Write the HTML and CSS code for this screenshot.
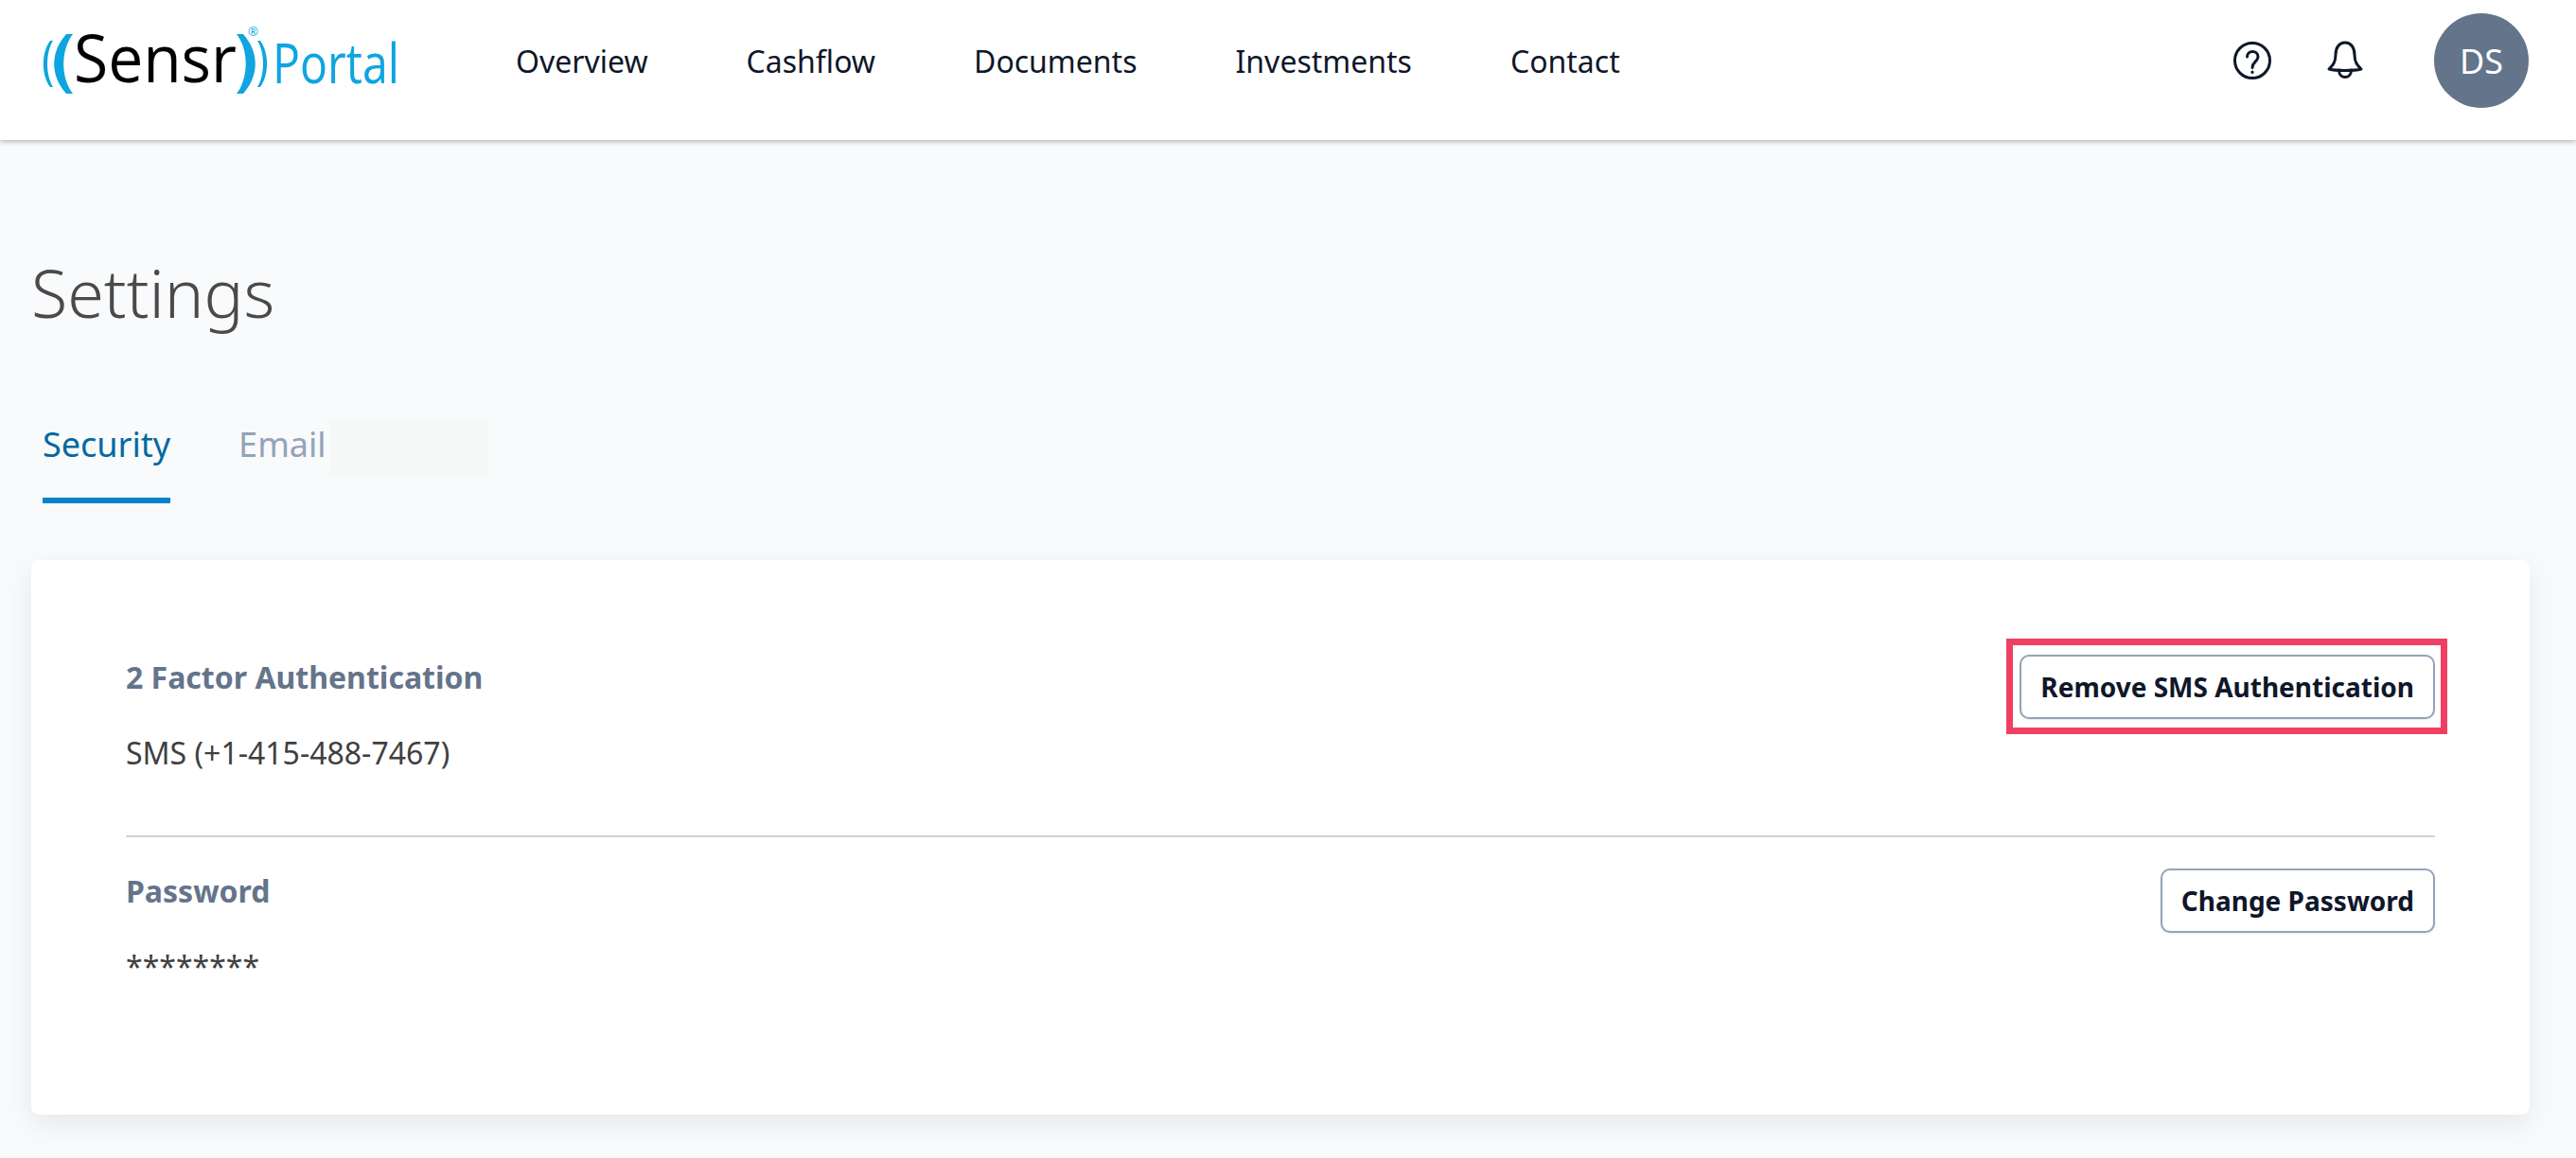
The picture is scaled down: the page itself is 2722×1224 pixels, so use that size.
FILE: index.html
```html
<!DOCTYPE html>
<html lang="en">
<head>
<meta charset="utf-8">
<title>Settings</title>
<link rel="stylesheet" href="styles.css">
</head>
<body>
<header class="topbar">
  <svg class="logo" viewBox="40 5 390 110" width="390" height="110" aria-label="Sensr Portal">
    <g class="logo-arcs">
      <path d="M53 43 C43.5 56 43.5 79 53 92 H56 C48 79 48 56 56 43 Z"/>
      <path d="M70 36 C53 55 53 80 70 99 H77 C64 82 64 53 77 36 Z"/>
      <path d="M257 36 C274 55 274 80 257 99 H250 C263 82 263 53 250 36 Z"/>
      <path d="M275 43 C284.5 56 284.5 79 275 92 H272 C280 79 280 56 272 43 Z"/>
    </g>
    <text class="logo-name" x="78" y="87" textLength="172" lengthAdjust="spacingAndGlyphs">Sensr</text>
    <text class="logo-reg" x="262" y="38" textLength="11" lengthAdjust="spacingAndGlyphs">®</text>
    <text class="logo-portal" x="288" y="88" textLength="134" lengthAdjust="spacingAndGlyphs">Portal</text>
  </svg>
  <nav class="mainnav">
    <a>Overview</a>
    <a>Cashflow</a>
    <a>Documents</a>
    <a>Investments</a>
    <a>Contact</a>
  </nav>
  <div class="actions">
    <svg class="icon help" viewBox="0 0 44 44" width="44" height="44">
      <circle cx="22" cy="22" r="18.5"/>
      <path d="M16.5 18 C16.5 10.5 28 10.5 28 18 C28 23 22 23.5 22 29.5"/>
      <path d="M22 34 V34.6"/>
    </svg>
    <svg class="icon bell" viewBox="0 0 40 44" width="40" height="44">
      <path d="M3 31 C7 27 10 24 10 16 C10 8 14 3 20 3 C26 3 30 8 30 16 C30 24 33 27 37 31 C30 33 10 33 3 31 Z"/>
      <path d="M13.5 32 C13.5 42 26.5 42 26.5 32"/>
    </svg>
    <div class="avatar">DS</div>
  </div>
</header>
<main class="page">
  <h1 class="title">Settings</h1>
  <div class="tabs">
    <a class="tab tab-active">Security</a>
    <a class="tab">Email<span class="redaction"></span></a>
  </div>
  <section class="card">
    <div class="row row-first">
      <div class="info">
        <div class="label">2 Factor Authentication</div>
        <div class="value">SMS (+1-415-488-7467)</div>
      </div>
      <div class="highlight"><button class="btn">Remove SMS Authentication</button></div>
    </div>
    <div class="row row-second">
      <div class="info">
        <div class="label">Password</div>
        <div class="value">********</div>
      </div>
      <button class="btn">Change Password</button>
    </div>
  </section>
</main>
</body>
</html>
```
FILE: styles.css
```css
* { box-sizing: border-box; }
html, body { margin: 0; padding: 0; }
body {
  width: 2722px;
  height: 1224px;
  overflow: hidden;
  background: #f8fafc;
  font-family: "Noto Sans", "Open Sans", sans-serif;
  color: #404040;
}
.topbar {
  display: flex;
  align-items: center;
  height: 148px;
  padding: 0 50px 20px 40px;
  background: #fff;
  box-shadow: 0 2px 5px rgba(15, 23, 42, .28);
}
.logo { flex: none; margin-top: -8px; }
.logo-arcs { fill: #0ea5e0; }
.logo-name { font-family: "Open Sans", sans-serif; font-size: 70px; fill: #000; }
.logo-reg { font-family: "Open Sans", sans-serif; font-size: 13px; fill: #0ea5e0; }
.logo-portal { font-family: "Open Sans", sans-serif; font-size: 58px; fill: #0ea5e0; }
.mainnav {
  display: flex;
  gap: 104px;
  margin-left: 115px;
  font-size: 32px;
  color: #0f172a;
}
.actions { display: flex; align-items: center; margin-left: auto; }
.icon { fill: none; stroke: #0f172a; stroke-width: 3; stroke-linecap: round; stroke-linejoin: round; }
.bell { margin-left: 56px; }
.avatar {
  display: flex;
  align-items: center;
  justify-content: center;
  width: 100px;
  height: 100px;
  margin-left: 74px;
  border-radius: 50%;
  background: #64748b;
  color: #fff;
  font-size: 36px;
}
.page { padding: 0 49px 0 33px; }
.title {
  margin: 0;
  padding-top: 112px;
  font-size: 70px;
  line-height: 98px;
  font-weight: 300;
  color: #4a4a4a;
}
.tabs {
  display: flex;
  align-items: flex-start;
  gap: 72px;
  height: 162px;
  margin-top: 72px;
  padding-left: 12px;
}
.tab {
  display: flex;
  height: 102px;
  padding-top: 17px;
  font-size: 36px;
  line-height: 46px;
  color: #94a3b8;
}
.tab-active { color: #0369a1; border-bottom: 6px solid #0284c7; }
.redaction {
  width: 167px;
  height: 60px;
  margin: -5px 0 0 3px;
  background: #f6f8f7;
}
.card {
  height: 586px;
  padding: 0 100px;
  background: #fff;
  border-radius: 8px;
  box-shadow: 0 10px 30px rgba(15, 23, 42, .08);
}
.row { display: flex; justify-content: space-between; align-items: flex-start; }
.row-first { height: 293px; padding-top: 100px; border-bottom: 2px solid #cfd1d3; }
.row-second { padding-top: 33px; }
.info { padding-top: 2px; }
.label { font-size: 32px; line-height: 44px; font-weight: 700; color: #64748b; }
.value { margin-top: 36px; font-size: 32px; line-height: 44px; color: #404040; }
.highlight { position: relative; }
.highlight::after {
  content: "";
  position: absolute;
  inset: -17px -13px -16px -14px;
  border: 7px solid #ef4063;
  pointer-events: none;
}
.btn {
  display: block;
  height: 68px;
  padding: 0 20px;
  background: #fff;
  border: 2px solid #94a3b8;
  border-radius: 10px;
  box-shadow: 0 1px 2px rgba(15, 23, 42, .1);
  font-family: inherit;
  font-size: 28px;
  font-weight: 700;
  color: #0f172a;
}
```
